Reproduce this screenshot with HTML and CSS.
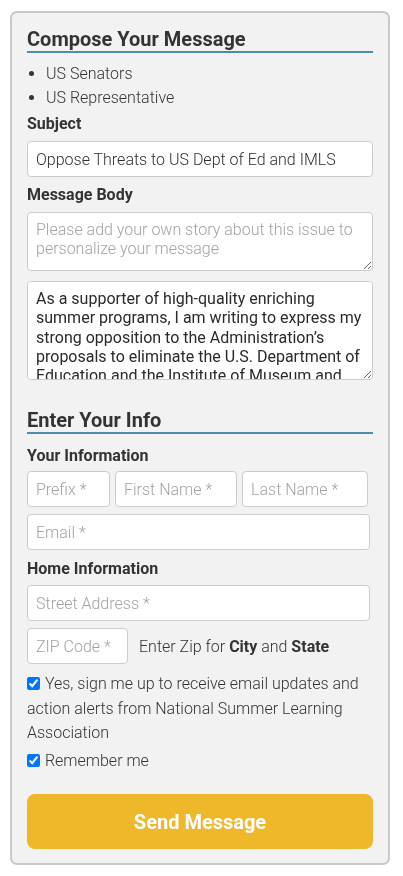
FILE: index.html
```html
<!DOCTYPE html>
<html lang="en">
<head>
<meta charset="utf-8">
<title>Compose Your Message</title>
<link rel="stylesheet" href="styles.css">
</head>
<body>
<form class="card">
  <h2 class="section-title">Compose Your Message</h2>
  <ul class="targets">
    <li>US Senators</li>
    <li>US Representative</li>
  </ul>
  <label class="field-label first">Subject</label>
  <input class="input" type="text" value="Oppose Threats to US Dept of Ed and IMLS">
  <label class="field-label">Message Body</label>
  <textarea class="input textarea story" placeholder="Please add your own story about this issue to personalize your message"></textarea>
  <textarea class="input textarea body-text">As a supporter of high-quality enriching summer programs, I am writing to express my strong opposition to the Administration’s proposals to eliminate the U.S. Department of Education and the Institute of Museum and Library Services.</textarea>

  <h2 class="section-title info-title">Enter Your Info</h2>
  <div class="info-fields">
    <div class="field-label info-label">Your Information</div>
    <div class="name-row">
      <input class="input" type="text" placeholder="Prefix *">
      <input class="input" type="text" placeholder="First Name *">
      <input class="input" type="text" placeholder="Last Name *">
    </div>
    <input class="input email" type="email" placeholder="Email *">
    <div class="field-label home-label">Home Information</div>
    <input class="input" type="text" placeholder="Street Address *">
    <div class="zip-row">
      <input class="input zip" type="text" placeholder="ZIP Code *">
      <span class="zip-hint">Enter Zip for <b>City</b> and <b>State</b></span>
    </div>
  </div>
  <label class="check optin"><input type="checkbox" checked> Yes, sign me up to receive email updates and action alerts from National Summer Learning Association</label>
  <label class="check remember"><input type="checkbox" checked> Remember me</label>
  <button class="send" type="button">Send Message</button>
</form>
</body>
</html>
```
FILE: styles.css
```css
* { box-sizing: border-box; }

body {
  margin: 0;
  padding: 11px 13px 11px 10px;
  background: #ffffff;
  font-family: Roboto, "Liberation Sans", Arial, sans-serif;
  font-size: 16px;
  font-weight: 300;
  color: #333333;
}

.card {
  display: block;
  background: #f2f2f2;
  border: 2px solid #c9c9c9;
  border-radius: 7px;
  padding: 14px 15px 14px 15px;
}

.section-title {
  margin: 0;
  font-size: 20px;
  line-height: 24px;
  font-weight: 700;
  color: #333333;
  border-bottom: 2px solid #4a8db3;
}

.targets {
  margin: 9px 0 0 0;
  padding: 0 0 0 19px;
  line-height: 24px;
  color: #333333;
}

.field-label {
  display: block;
  margin: 6px 0 5px;
  font-weight: 700;
  line-height: 24px;
  color: #333333;
}

.field-label.first { margin-top: 2px; }

.input {
  display: block;
  width: 100%;
  height: 36px;
  margin: 0;
  padding: 0 8px;
  border: 1px solid #cccccc;
  border-radius: 4px;
  background: #ffffff;
  font-family: Roboto, "Liberation Sans", Arial, sans-serif;
  font-size: 16px;
  font-weight: 300;
  color: #2e2e2e;
}

.input::placeholder { color: #a3a3a3; opacity: 1; }

.textarea {
  padding: 7px 8px;
  line-height: 19.3px;
  resize: vertical;
}

.story { height: 59px; }

.body-text {
  height: 99px;
  margin-top: 10px;
  font-weight: 400;
  color: #2a2a2a;
}

.info-title { margin-top: 28px; }

.info-fields { margin-right: 3px; }

.info-label { margin: 10px 0 3px; }

.name-row {
  display: grid;
  grid-template-columns: 83px 122px 126px;
  column-gap: 5px;
}

.email { margin-top: 7px; }

.home-label { margin: 7px 0 4px; }

.zip-row {
  display: flex;
  align-items: center;
  gap: 11px;
  margin-top: 7px;
}

.zip { width: 101px; flex: none; }

.zip-hint { color: #333333; }
.zip-hint b { font-weight: 700; }

.check {
  display: block;
  line-height: 24.5px;
  color: #333333;
}

.check input {
  width: 13px;
  height: 13px;
  margin: 0 1px 0 0;
  vertical-align: -1px;
}

.optin { margin-top: 8px; }
.remember { margin-top: 3px; }

.send {
  display: block;
  width: 100%;
  height: 55px;
  margin-top: 21px;
  border: none;
  border-radius: 8px;
  background: #efb82a;
  color: #ffffff;
  font-family: Roboto, "Liberation Sans", Arial, sans-serif;
  font-size: 20px;
  font-weight: 700;
  cursor: pointer;
}
```
